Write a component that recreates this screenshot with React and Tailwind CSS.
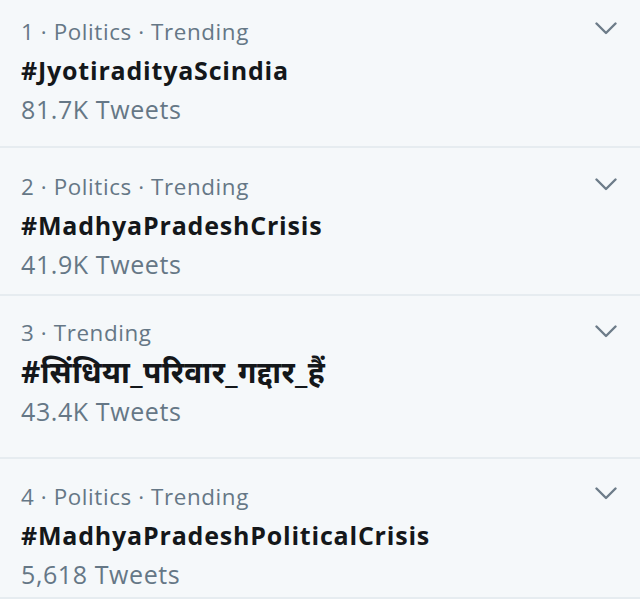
const trends = [
  { meta: "1 · Politics · Trending", tag: "#JyotiradityaScindia", count: "81.7K Tweets", h: "h-[148px]", pt: "pt-[13px]", ct: "top-[22px]" },
  { meta: "2 · Politics · Trending", tag: "#MadhyaPradeshCrisis", count: "41.9K Tweets", h: "h-[148px]", pt: "pt-[20px]", ct: "top-[30px]" },
  { meta: "3 · Trending", tag: "#सिंधिया_परिवार_गद्दार_हैं", count: "43.4K Tweets", h: "h-[163px]", pt: "pt-[18px]", ct: "top-[29px]", deva: true },
  { meta: "4 · Politics · Trending", tag: "#MadhyaPradeshPoliticalCrisis", count: "5,618 Tweets", h: "h-[140px]", pt: "pt-[19px]", ct: "top-[28px]" },
];

function Chevron({ top }) {
  return (
    <svg width="22" height="13" viewBox="0 0 22 13" fill="none" className={`absolute right-[23px] ${top}`}>
      <polyline points="1.5,1.5 11,11 20.5,1.5" stroke="#6d7c89" strokeWidth="2.4" strokeLinecap="round" strokeLinejoin="round" />
    </svg>
  );
}

function App() {
  return (
    <div className="w-[640px] h-[599px] overflow-hidden bg-[#f5f8fa] font-['Open_Sans','Noto_Sans',sans-serif]">
      {trends.map((t, i) => (
        <div key={i} className={`${t.h} ${t.pt} relative pl-[21px] border-b-2 border-[#e6ecf0]`}>
          <div className="text-[22.4px] leading-[38px] text-[#657786] tracking-[0.6px]">{t.meta}</div>
          <div
            className={
              t.deva
                ? "text-[30px] leading-[40px] font-bold text-[#14171a] tracking-[0.4px]"
                : "text-[25px] leading-[39px] font-bold text-[#14171a] tracking-[0.8px]"
            }
          >
            {t.tag}
          </div>
          <div className="text-[25px] leading-[39px] text-[#657786] tracking-[0.6px]">{t.count}</div>
          <Chevron top={t.ct} />
        </div>
      ))}
    </div>
  );
}

export default App;
